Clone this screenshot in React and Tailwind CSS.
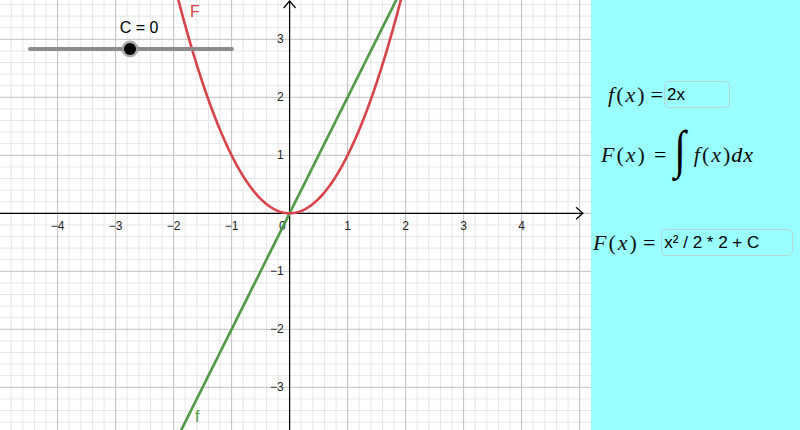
import React from 'react';

const OX = 289.6;
const OY = 213.3;
const U = 58;
const W = 591;
const H = 430;

const toX = (x) => OX + x * U;
const toY = (y) => OY - y * U;

function Grid() {
  const minor = [];
  const major = [];
  for (let i = -30; i <= 30; i++) {
    const x = OX + i * (U / 5);
    if (x < 0 || x > W) continue;
    (i % 5 === 0 ? major : minor).push(<line key={'vx' + i} x1={x} y1={0} x2={x} y2={H} />);
  }
  for (let i = -25; i <= 25; i++) {
    const y = OY + i * (U / 5);
    if (y < 0 || y > H) continue;
    (i % 5 === 0 ? major : minor).push(<line key={'hy' + i} x1={0} y1={y} x2={W} y2={y} />);
  }
  return (
    <>
      <g stroke="#e6e6e6" strokeWidth="1">{minor}</g>
      <g stroke="#c0c0c0" strokeWidth="1">{major}</g>
    </>
  );
}

function curve(fn, from, to, step = 0.02) {
  let d = '';
  for (let x = from; x <= to + 1e-9; x += step) {
    d += (d ? ' L' : 'M') + toX(x).toFixed(2) + ' ' + toY(fn(x)).toFixed(2);
  }
  return d;
}

function Graph() {
  const xs = [-4, -3, -2, -1, 1, 2, 3, 4];
  const ys = [3, 2, 1, -1, -2, -3];
  return (
    <svg width={W} height={H} className="block">
      <rect width={W} height={H} fill="#ffffff" />
      <Grid />
      {/* axes */}
      <g stroke="#000" strokeWidth="1.2" fill="none">
        <line x1={0} y1={OY} x2={583} y2={OY} />
        <path d={`M576 ${OY - 6} L583 ${OY} L576 ${OY + 6}`} />
        <line x1={OX} y1={H} x2={OX} y2={1} />
        <path d={`M${OX - 6} 8 L${OX} 1 L${OX + 6} 8`} />
      </g>
      <g fontFamily="'Liberation Sans', Arial, sans-serif" fontSize="12" fill="#222">
        {xs.map((v) => (
          <text key={'x' + v} x={toX(v)} y={OY + 17} textAnchor="middle">
            {v < 0 ? '\u2212' + -v : v}
          </text>
        ))}
        <text x={OX - 4} y={OY + 17} textAnchor="end">0</text>
        {ys.map((v) => (
          <text key={'y' + v} x={OX - 6} y={toY(v) + 4} textAnchor="end">
            {v < 0 ? '\u2212' + -v : v}
          </text>
        ))}
      </g>
      {/* f(x) = 2x */}
      <path d={curve((x) => 2 * x, -2.2, 2.2, 0.05)} stroke="#4f9a45" strokeWidth="2.6" fill="none" />
      {/* F(x) = x^2 */}
      <path d={curve((x) => x * x, -2.05, 2.05)} stroke="#d9434a" strokeWidth="2.6" fill="none" />
      <g fontFamily="'Liberation Sans', Arial, sans-serif" fontSize="16">
        <text x={190} y={17} fill="#d9434a">F</text>
        <text x={195} y={422} fill="#4f9a45">f</text>
      </g>
      {/* slider C */}
      <line x1={30} y1={49} x2={232} y2={49} stroke="#8c8c8c" strokeWidth="4" strokeLinecap="round" />
      <circle cx={130} cy={49} r={8.5} fill="#9a9a9a" opacity="0.8" />
      <circle cx={130} cy={49} r={6} fill="#000" />
      <text x={139} y={33} textAnchor="middle" fontFamily="'Liberation Sans', Arial, sans-serif" fontSize="16" fill="#000">
        C = 0
      </text>
    </svg>
  );
}

const serif = "font-['Liberation_Serif','Times_New_Roman',serif]";
const sans = "font-['Liberation_Sans',Arial,sans-serif]";

function Fx({ name }) {
  return (
    <span className={`${serif} text-[22px] leading-none text-[#111] whitespace-nowrap font-light`}>
      <i className="pr-[2px]">{name}</i>(<i className="mx-[2px]">x</i>)
    </span>
  );
}

function Box({ children, className }) {
  return (
    <div className={`h-[27px] border border-[#b3d6d6] rounded-[5px] flex items-center px-[2px] ${sans} text-[17px] text-black ${className}`}>
      {children}
    </div>
  );
}

export default function App() {
  return (
    <div className="w-[800px] h-[430px] flex overflow-hidden bg-white">
      <div className="w-[591px] shrink-0 border-r border-[#dddddd]">
        <Graph />
      </div>
      <div className="flex-1 bg-[#99ffff] flex flex-col pt-[81px]">
        <div className="flex items-center ml-[17px] h-[27px]">
          <Fx name="f" />
          <span className={`${serif} text-[22px] leading-none ml-[6px]`}>=</span>
          <Box className="w-[66px] ml-[1px]">2x</Box>
        </div>
        <div className="flex items-center ml-[10px] mt-[25px] h-[44px]">
          <Fx name="F" />
          <span className={`${serif} text-[22px] leading-none ml-[9px]`}>=</span>
          <span className={`${serif} italic text-[42px] leading-none ml-[8px] mr-[8px] inline-block scale-y-[1.25] -translate-y-[6px]`}>∫</span>
          <Fx name="f" />
          <span className={`${serif} text-[22px] leading-none italic ml-[1px] tracking-[1px]`}>dx</span>
        </div>
        <div className="flex items-center ml-[2px] mt-[52px] h-[27px]">
          <Fx name="F" />
          <span className={`${serif} text-[22px] leading-none ml-[6px]`}>=</span>
          <Box className="w-[132px] ml-[6px]">x² / 2 * 2 + C</Box>
        </div>
      </div>
    </div>
  );
}
